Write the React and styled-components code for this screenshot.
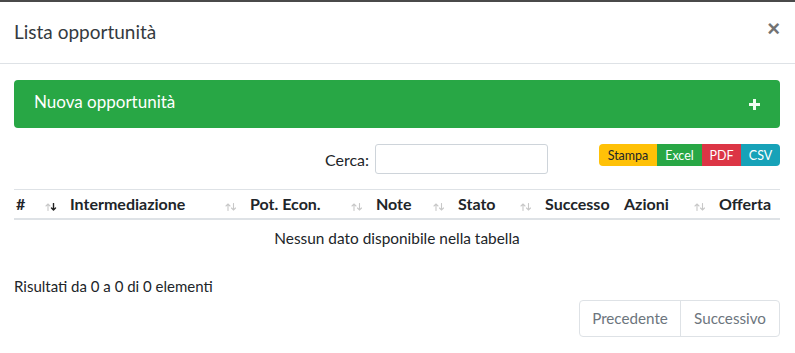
import React from 'react';
import styled, { createGlobalStyle } from 'styled-components';

const Global = createGlobalStyle`
  html, body { margin: 0; padding: 0; background: #fff; }
  body { font-family: Lato, "Noto Sans", sans-serif; color: #212529; }
  * { box-sizing: border-box; }
`;

const Modal = styled.div`
  width: 795px;
  height: 353px;
  border-top: 2px solid #4a4a4a;
  background: #fff;
  overflow: hidden;
`;

const Header = styled.div`
  display: flex;
  align-items: center;
  justify-content: space-between;
  height: 62px;
  padding: 0 15px 3px 14px;
  border-bottom: 1px solid #dee2e6;
`;

const Title = styled.h5`
  margin: 0;
  font-size: 19px;
  font-weight: 400;
  color: #343a40;
`;

const Close = styled.button`
  border: 0;
  background: none;
  padding: 0;
  font-family: Arial, "Liberation Sans", sans-serif;
  font-size: 22px;
  font-weight: 700;
  line-height: 1;
  color: #000;
  opacity: 0.55;
  margin-top: -4px;
`;

const Body = styled.div`
  padding: 16px 15px 0 14px;
`;

const NewBar = styled.div`
  display: flex;
  align-items: center;
  justify-content: space-between;
  height: 48px;
  padding: 0 19px 5px 20px;
  background: #28a745;
  border-radius: 4px;
  color: #fff;
  font-size: 17px;
  font-weight: 400;
`;

const PlusWrap = styled.span`
  display: flex;
  margin-top: 5px;
`;

const Toolbar = styled.div`
  display: flex;
  align-items: flex-start;
  margin-top: 16px;
  height: 30px;
`;

const SearchGroup = styled.label`
  display: flex;
  align-items: center;
  justify-content: flex-end;
  width: 534px;
  font-size: 16px;
  color: #212529;
`;

const SearchInput = styled.input`
  width: 173px;
  height: 30px;
  margin-left: 6px;
  border: 1px solid #ced4da;
  border-radius: 3px;
  background: #fff;
`;

const BtnGroup = styled.div`
  display: flex;
  margin-left: auto;
  border-radius: 4px;
  overflow: hidden;
`;

const ExportBtn = styled.span`
  display: flex;
  align-items: center;
  justify-content: center;
  height: 22px;
  width: ${p => p.$w}px;
  background: ${p => p.$bg};
  color: ${p => p.$fg};
  font-size: 12.5px;
`;

const Table = styled.table`
  width: 766px;
  margin-top: 15px;
  border-collapse: collapse;
  table-layout: fixed;
  border-top: 1px solid #dee2e6;
`;

const Th = styled.th`
  width: ${p => p.$w}px;
  height: 29px;
  padding: 0 5px 0 ${p => p.$pl ?? 8}px;
  border-bottom: 2px solid #dee2e6;
  text-align: left;
  font-size: 16px;
  font-weight: 700;
  color: #212529;
  white-space: nowrap;
`;

const ThInner = styled.div`
  display: flex;
  align-items: center;
`;

const SortIcon = styled.svg`
  margin-left: auto;
  margin-top: 7px;
  flex: none;
`;

const EmptyCell = styled.td`
  height: 40px;
  text-align: center;
  font-size: 15.4px;
  color: #212529;
  padding: 0 0 2px;
`;

const Info = styled.div`
  margin-top: 18px;
  font-size: 15px;
  color: #212529;
`;

const Pager = styled.div`
  display: flex;
  justify-content: flex-end;
  margin-top: 5px;
`;

const PageBox = styled.div`
  display: flex;
  border: 1px solid #dee2e6;
  border-radius: 4px;
  height: 37px;
`;

const PageBtn = styled.span`
  display: flex;
  align-items: center;
  justify-content: center;
  width: ${p => p.$w}px;
  font-size: 15.2px;
  color: #6c757d;
  & + & { border-left: 1px solid #dee2e6; }
`;

const Sort = ({ active }) => (
  <SortIcon width="12" height="8" viewBox="0 0 12 8">
    <g fill="none" strokeWidth="1.1" strokeLinecap="round">
      <path d="M3 7.5V1M1 3l2-2 2 2" stroke="#c8c8c8" />
      <path d="M8.5 0.5V7M6.5 5l2 2 2-2" stroke={active ? '#222' : '#c8c8c8'} strokeWidth={active ? 1.4 : 1.1} />
    </g>
  </SortIcon>
);

const Plus = () => (
  <svg width="13" height="13" viewBox="0 0 13 13">
    <path d="M6.5 1v11M1 6.5h11" stroke="#f0fff2" strokeWidth="3" />
  </svg>
);

const cols = [
  { label: '#', w: 48, pl: 2, sort: 'active' },
  { label: 'Intermediazione', w: 180, sort: true },
  { label: 'Pot. Econ.', w: 126, sort: true },
  { label: 'Note', w: 82, sort: true },
  { label: 'Stato', w: 87, sort: true },
  { label: 'Successo', w: 79 },
  { label: 'Azioni', w: 95, sort: true },
  { label: 'Offerta', w: 69 },
];

export default function App() {
  return (
    <>
      <Global />
      <Modal>
        <Header>
          <Title>Lista opportunità</Title>
          <Close>×</Close>
        </Header>
        <Body>
          <NewBar>
            <span>Nuova opportunità</span>
            <PlusWrap><Plus /></PlusWrap>
          </NewBar>
          <Toolbar>
            <SearchGroup>
              Cerca:
              <SearchInput type="search" />
            </SearchGroup>
            <BtnGroup>
              <ExportBtn $w={58} $bg="#ffc107" $fg="#212529">Stampa</ExportBtn>
              <ExportBtn $w={45} $bg="#28a745" $fg="#fff">Excel</ExportBtn>
              <ExportBtn $w={39} $bg="#dc3545" $fg="#fff">PDF</ExportBtn>
              <ExportBtn $w={39} $bg="#17a2b8" $fg="#fff">CSV</ExportBtn>
            </BtnGroup>
          </Toolbar>
          <Table>
            <thead>
              <tr>
                {cols.map(c => (
                  <Th key={c.label} $w={c.w} $pl={c.pl}>
                    <ThInner>
                      {c.label}
                      {c.sort && <Sort active={c.sort === 'active'} />}
                    </ThInner>
                  </Th>
                ))}
              </tr>
            </thead>
            <tbody>
              <tr>
                <EmptyCell colSpan={8}>Nessun dato disponibile nella tabella</EmptyCell>
              </tr>
            </tbody>
          </Table>
          <Info>Risultati da 0 a 0 di 0 elementi</Info>
          <Pager>
            <PageBox>
              <PageBtn $w={100}>Precedente</PageBtn>
              <PageBtn $w={99}>Successivo</PageBtn>
            </PageBox>
          </Pager>
        </Body>
      </Modal>
    </>
  );
}
